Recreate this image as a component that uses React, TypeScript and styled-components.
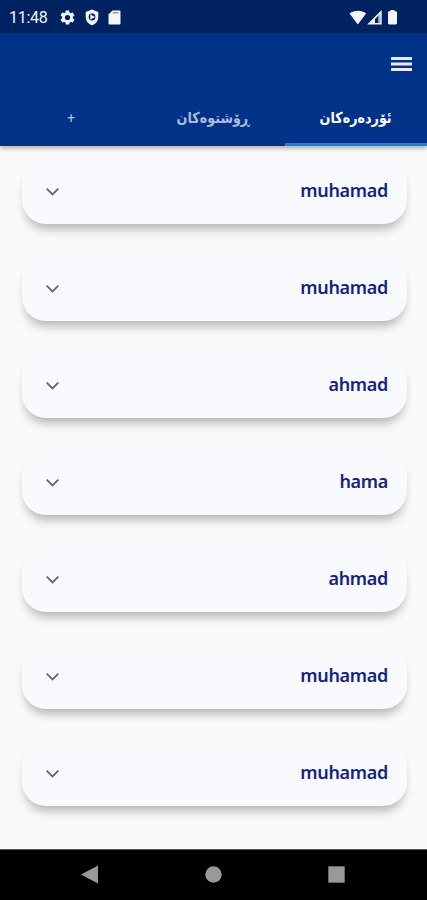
import React from "react";
import styled, { createGlobalStyle } from "styled-components";

const GlobalStyle = createGlobalStyle`
  * { box-sizing: border-box; }
  body { margin: 0; background: #fafafa; }
`;

const Screen = styled.div`
  width: 427px;
  height: 900px;
  display: flex;
  flex-direction: column;
  overflow: hidden;
  background: #fafafa;
  font-family: "Noto Sans", "Open Sans", sans-serif;
`;

const StatusBar = styled.div`
  height: 33px;
  flex: none;
  display: flex;
  justify-content: space-between;
  background: #002261;
  padding: 2px 29px 0 9px;
  color: #f4f6fc;
`;

const StatusGroup = styled.div<{ $gap: number }>`
  display: flex;
  align-items: center;
  gap: ${(p) => p.$gap}px;
  svg { display: block; }
`;

const Clock = styled.span`
  font: 400 16px/20px Roboto, sans-serif;
  width: 41px;
  letter-spacing: -0.3px;
  white-space: nowrap;
`;

const Header = styled.header`
  height: 113px;
  flex: none;
  display: flex;
  flex-direction: column;
  background: #003287;
  box-shadow: 0 2px 5px rgba(0, 0, 0, 0.35);
  z-index: 1;
`;

const Toolbar = styled.div`
  height: 57px;
  display: flex;
  justify-content: flex-end;
  padding: 24px 15px 0 0;
`;

const MenuButton = styled.button`
  border: 0;
  padding: 0;
  width: 21px;
  height: 15px;
  background: none;
  svg { display: block; }
`;

const Tabs = styled.nav`
  flex: 1;
  display: grid;
  grid-template-columns: repeat(3, 1fr);
  direction: rtl;
`;

const Tab = styled.div<{ $active?: boolean }>`
  display: flex;
  align-items: center;
  justify-content: center;
  padding-top: 3px;
  border-bottom: 3px solid ${(p) => (p.$active ? "#1784dc" : "#003287")};
  color: ${(p) => (p.$active ? "#ffffff" : "#aebcdc")};
  font: bold 15px/20px "DejaVu Sans", sans-serif;
  white-space: nowrap;
`;

const TabLabel = styled.span<{ $size: number }>`
  font-size: ${(p) => p.$size}px;
  transform: scale(0.91, 1.08);
`;

const List = styled.main`
  flex: 1;
  display: flex;
  flex-direction: column;
  gap: 32px;
  padding: 13px 20px 0 22px;
`;

const Card = styled.div`
  height: 65px;
  flex: none;
  display: flex;
  align-items: center;
  justify-content: space-between;
  padding: 0 19px 2px 23px;
  border-radius: 24px;
  background: #f9fafd;
  box-shadow: 0 9px 11px -4px rgba(0, 0, 0, 0.25), 0 5px 8px -2px rgba(0, 0, 0, 0.06);
  svg { display: block; margin-top: 2px; }
`;

const Name = styled.span`
  color: #14237f;
  font-size: 18px;
  font-weight: 650;
  letter-spacing: -0.3px;
  margin-bottom: 1px;
  line-height: 26px;
`;

const NavBar = styled.footer`
  height: 51px;
  flex: none;
  display: flex;
  justify-content: space-between;
  align-items: center;
  padding: 0 82px 2px 81px;
  background: #000;
  border-top: 1px solid #555;
  svg { display: block; }
`;

const names = ["muhamad", "muhamad", "ahmad", "hama", "ahmad", "muhamad", "muhamad"];

const Gear = () => (
  <svg width="17" height="17" viewBox="0 0 24 24" fill="currentColor">
    <path
      fillRule="evenodd"
      d="M19.4 13a7.500 7.500 0 0 0 0-2l2.100-1.600a.5.5 0 0 0 .1-.6l-2-3.500a.5.5 0 0 0-.6-.2l-2.500 1a7.500 7.500 0 0 0-1.700-1l-.4-2.600a.5.5 0 0 0-.5-.5h-4a.5.5 0 0 0-.5.4L9 5a7.500 7.500 0 0 0-1.700 1l-2.500-1a.5.5 0 0 0-.6.2l-2 3.500a.5.5 0 0 0 .1.600L4.500 11a7.500 7.500 0 0 0 0 2l-2.100 1.600a.5.5 0 0 0-.1.600l2 3.500c.1.200.4.300.6.200l2.500-1a7.500 7.500 0 0 0 1.700 1l.4 2.600c0 .3.200.5.5.5h4c.3 0 .5-.2.500-.4L15 19a7.500 7.500 0 0 0 1.700-1l2.500 1c.2.100.5 0 .6-.2l2-3.500a.5.5 0 0 0-.1-.6zM12 8.300a3.700 3.700 0 1 1 0 7.400 3.700 3.700 0 0 1 0-7.400z"
    />
  </svg>
);

const Shield = () => (
  <svg width="14" height="17" viewBox="0 0 14 17">
    <path d="M7 .5 13.300 3v5c0 4-2.600 7-6.300 8.200C3.300 15 .7 12 .7 8V3z" fill="currentColor" />
    <circle cx="7" cy="8" r="3.400" fill="#002261" />
    <path d="M5.300 5.300 10 8l-4.700 2.700z" fill="currentColor" />
  </svg>
);

const SdCard = () => (
  <svg width="13" height="15" viewBox="0 0 13 15">
    <path d="M4.500.5h6.700c.8 0 1.300.5 1.300 1.300v11.400c0 .8-.5 1.300-1.300 1.300H1.800c-.8 0-1.300-.5-1.300-1.300V4.500z" fill="currentColor" />
    <path d="M4.500 2.800h6" stroke="#8090b0" strokeWidth="1.300" />
  </svg>
);

const Signals = () => (
  <svg width="50" height="17" viewBox="0 0 50 17" fill="currentColor">
    <path d="M1.500 4.500C6.300.700 13.600.700 18.100 4.500L9.800 15.500z" />
    <path d="M33.700 1v14.500H19.200z" />
    <path d="M30.500 6.500v7.500h-3.500v-4z" fill="#002261" />
    <path d="M30.500 5.500h2V14h-2z" fill="#a5b0cb" />
    <path d="M42.500 1h4v1.200h1.300c.7 0 1.200.5 1.200 1.200v10.900c0 .7-.5 1.200-1.200 1.200h-6.600c-.7 0-1.200-.5-1.200-1.200V3.400c0-.7.5-1.200 1.200-1.200h1.300z" />
  </svg>
);

export default function App() {
  return (
    <>
      <GlobalStyle />
      <Screen>
        <StatusBar>
          <StatusGroup $gap={9}>
            <Clock>11:48</Clock>
            <Gear />
            <Shield />
            <SdCard />
          </StatusGroup>
          <StatusGroup $gap={0}>
            <Signals />
          </StatusGroup>
        </StatusBar>
        <Header>
          <Toolbar>
            <MenuButton aria-label="menu">
              <svg width="21" height="15" viewBox="0 0 21 15" fill="#e8ecfa">
                <path d="M0 0h21v3H0zM0 5.500h21v3H0zM0 11h21v3H0z" />
              </svg>
            </MenuButton>
          </Toolbar>
          <Tabs>
            <Tab $active><TabLabel $size={14}>ئۆردەرەکان</TabLabel></Tab>
            <Tab><TabLabel $size={14}>ڕۆشتوەکان</TabLabel></Tab>
            <Tab><TabLabel $size={12}>+</TabLabel></Tab>
          </Tabs>
        </Header>
        <List>
          {names.map((name, i) => (
            <Card key={i}>
              <svg width="16" height="10" viewBox="0 0 16 10" fill="none" stroke="#66676b" strokeWidth="1.800">
                <path d="m1.700 1.700 5.800 5.800 5.800-5.800" />
              </svg>
              <Name>{name}</Name>
            </Card>
          ))}
        </List>
        <NavBar>
          <svg width="17" height="19" viewBox="0 0 17 19"><path d="M0 9.500 17 .5v18z" fill="#999" /></svg>
          <svg width="17" height="17" viewBox="0 0 17 17"><circle cx="8.500" cy="8.500" r="8.200" fill="#999" /></svg>
          <svg width="17" height="17" viewBox="0 0 17 17"><path d="M.3.300h16.400v16.400H.3z" fill="#999" /></svg>
        </NavBar>
      </Screen>
    </>
  );
}
